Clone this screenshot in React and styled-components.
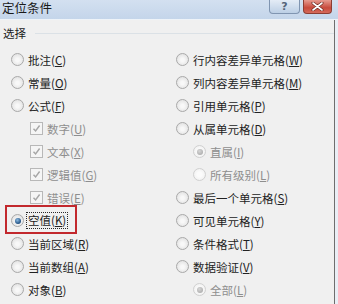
import React from "react";
import styled, { createGlobalStyle, css } from "styled-components";

const Global = createGlobalStyle`
  html, body { margin: 0; padding: 0; }
  body {
    width: 338px;
    height: 304px;
    overflow: hidden;
    background: #eef2f7;
    font-family: "Noto Sans CJK SC", "Noto Sans", sans-serif;
  }
`;

const Window = styled.div`
  width: 338px;
  height: 304px;
  display: flex;
  flex-direction: column;
  background: #e9eef5;
`;

const TitleBar = styled.div`
  height: 19px;
  flex: none;
  display: flex;
  align-items: flex-start;
  justify-content: space-between;
  background: linear-gradient(#d3e0f0, #c4d5ea);
  border-bottom: 1px solid #eef3f8;
`;

const Title = styled.div`
  font-size: 12.5px;
  line-height: 14px;
  padding-top: 1px;
  color: #1a1a1a;
  padding-left: 2px;
`;

const Controls = styled.div`
  display: flex;
  gap: 3px;
  margin-right: 6px;
`;

const CapButton = styled.div`
  height: 14px;
  box-sizing: border-box;
  display: flex;
  align-items: center;
  justify-content: center;
  border-radius: 0 0 4px 4px;
  border: 1px solid;
  border-top: none;
`;

const HelpButton = styled(CapButton)`
  width: 31px;
  border-color: #8095b1;
  background: linear-gradient(#e4ecf6, #bccfe5);
  color: #55657a;
  font-family: "DejaVu Sans", sans-serif;
  font-size: 11px;
  font-weight: bold;
  line-height: 1;
`;

const CloseButton = styled(CapButton)`
  width: 29px;
  border-color: #8c3d33;
  background: linear-gradient(#e69b90, #c84a3c 60%, #d56a5b);
`;

const Body = styled.div`
  flex: 1;
  margin-right: 3px;
  background: #f0f0f0;
  border-right: 1px solid #6e6e6e;
  padding-top: 5px;
  box-sizing: border-box;
`;

const Legend = styled.div`
  display: flex;
  align-items: center;
  height: 16px;
  padding-left: 3px;
  font-size: 11.5px;
  color: #1b1b1b;
  &::after {
    content: "";
    flex: 1;
    height: 1px;
    margin-left: 9px;
    background: #dbe1e6;
  }
`;

const Columns = styled.div`
  display: grid;
  grid-template-columns: 168px 1fr;
  margin-top: 7px;
`;

const Column = styled.div`
  display: flex;
  flex-direction: column;
  padding-left: ${(p) => p.$pad}px;
`;

const Option = styled.div`
  position: relative;
  height: 23px;
  display: flex;
  align-items: center;
  gap: 4px;
  padding-left: ${(p) => p.$indent || 0}px;
  font-size: 11.5px;
  color: ${(p) => (p.$disabled ? "#8e8e8e" : "#222222")};
  white-space: nowrap;
`;

const Radio = styled.span`
  position: relative;
  flex: none;
  width: 13px;
  height: 13px;
  box-sizing: border-box;
  border-radius: 50%;
  border: 1px solid ${(p) => (p.$disabled ? "#d0d0d0" : "#a9a9a9")};
  background: ${(p) =>
    p.$disabled
      ? "radial-gradient(circle at 50% 50%, #fbfbfb 30%, #ececec 100%)"
      : "radial-gradient(circle at 50% 55%, #f8f8f8 20%, #dadada 100%)"};
  ${(p) =>
    p.$checked &&
    css`
      &::after {
        content: "";
        position: absolute;
        left: 2.5px;
        top: 2.5px;
        width: 6px;
        height: 6px;
        border-radius: 50%;
        background: ${p.$disabled
          ? "radial-gradient(circle at 40% 35%, #d6d6d6, #a2a2a2)"
          : "radial-gradient(circle at 40% 35%, #8cbbe2, #1f4f82 70%)"};
      }
    `}
`;

const Check = styled.span`
  flex: none;
  width: 13px;
  height: 13px;
  box-sizing: border-box;
  border: 1px solid #b8b8b8;
  background: #f5f5f5;
  display: flex;
  align-items: center;
  justify-content: center;
`;

const Highlight = styled.span`
  position: absolute;
  left: -6px;
  top: -4px;
  width: 72px;
  height: 29px;
  box-sizing: border-box;
  border: 2px solid #c2282d;
  pointer-events: none;
`;

const Focus = styled.span`
  outline: 1px dotted #2a2a2a;
  outline-offset: 0;
  padding: 0 1px;
  margin-left: -1px;
  line-height: 15px;
`;

const Label = ({ text, k }) => (
  <span>
    {text}(<u>{k}</u>)
  </span>
);

const CheckMark = () => (
  <svg width="9" height="9" viewBox="0 0 9 9">
    <path d="M1.5 4.8 L3.6 7 L7.6 1.5" fill="none" stroke="#a6a6a6" strokeWidth="1.4" />
  </svg>
);

const left = [
  { type: "radio", text: "批注", k: "C" },
  { type: "radio", text: "常量", k: "O" },
  { type: "radio", text: "公式", k: "F" },
  { type: "check", text: "数字", k: "U", indent: 19 },
  { type: "check", text: "文本", k: "X", indent: 19 },
  { type: "check", text: "逻辑值", k: "G", indent: 19 },
  { type: "check", text: "错误", k: "E", indent: 19 },
  { type: "radio", text: "空值", k: "K", checked: true, focus: true },
  { type: "radio", text: "当前区域", k: "R" },
  { type: "radio", text: "当前数组", k: "A" },
  { type: "radio", text: "对象", k: "B" },
];

const right = [
  { type: "radio", text: "行内容差异单元格", k: "W" },
  { type: "radio", text: "列内容差异单元格", k: "M" },
  { type: "radio", text: "引用单元格", k: "P" },
  { type: "radio", text: "从属单元格", k: "D" },
  { type: "radio", text: "直属", k: "I", indent: 17, disabled: true, checked: true },
  { type: "radio", text: "所有级别", k: "L", indent: 17, disabled: true },
  { type: "radio", text: "最后一个单元格", k: "S" },
  { type: "radio", text: "可见单元格", k: "Y" },
  { type: "radio", text: "条件格式", k: "T" },
  { type: "radio", text: "数据验证", k: "V" },
  { type: "radio", text: "全部", k: "L", indent: 17, disabled: true, checked: true },
];

const Item = ({ item }) => {
  const disabled = item.disabled || item.type === "check";
  return (
    <Option $indent={item.indent} $disabled={disabled}>
      {item.focus && <Highlight />}
      {item.type === "radio" ? (
        <Radio $checked={item.checked} $disabled={item.disabled} />
      ) : (
        <Check>
          <CheckMark />
        </Check>
      )}
      {item.focus ? (
        <Focus>
          <Label text={item.text} k={item.k} />
        </Focus>
      ) : (
        <Label text={item.text} k={item.k} />
      )}
    </Option>
  );
};

export default function App() {
  return (
    <>
      <Global />
      <Window>
        <TitleBar>
          <Title>定位条件</Title>
          <Controls>
            <HelpButton>?</HelpButton>
            <CloseButton>
              <svg width="13" height="9" viewBox="0 0 13 9">
                <path d="M2 1 L11 8 M11 1 L2 8" stroke="#6a2a22" strokeWidth="3" strokeLinecap="round" />
                <path d="M2 1 L11 8 M11 1 L2 8" stroke="#ffffff" strokeWidth="1.6" strokeLinecap="round" />
              </svg>
            </CloseButton>
          </Controls>
        </TitleBar>
        <Body>
          <Legend>选择</Legend>
          <Columns>
            <Column $pad={11}>
              {left.map((it, i) => (
                <Item key={i} item={it} />
              ))}
            </Column>
            <Column $pad={8}>
              {right.map((it, i) => (
                <Item key={i} item={it} />
              ))}
            </Column>
          </Columns>
        </Body>
      </Window>
    </>
  );
}
